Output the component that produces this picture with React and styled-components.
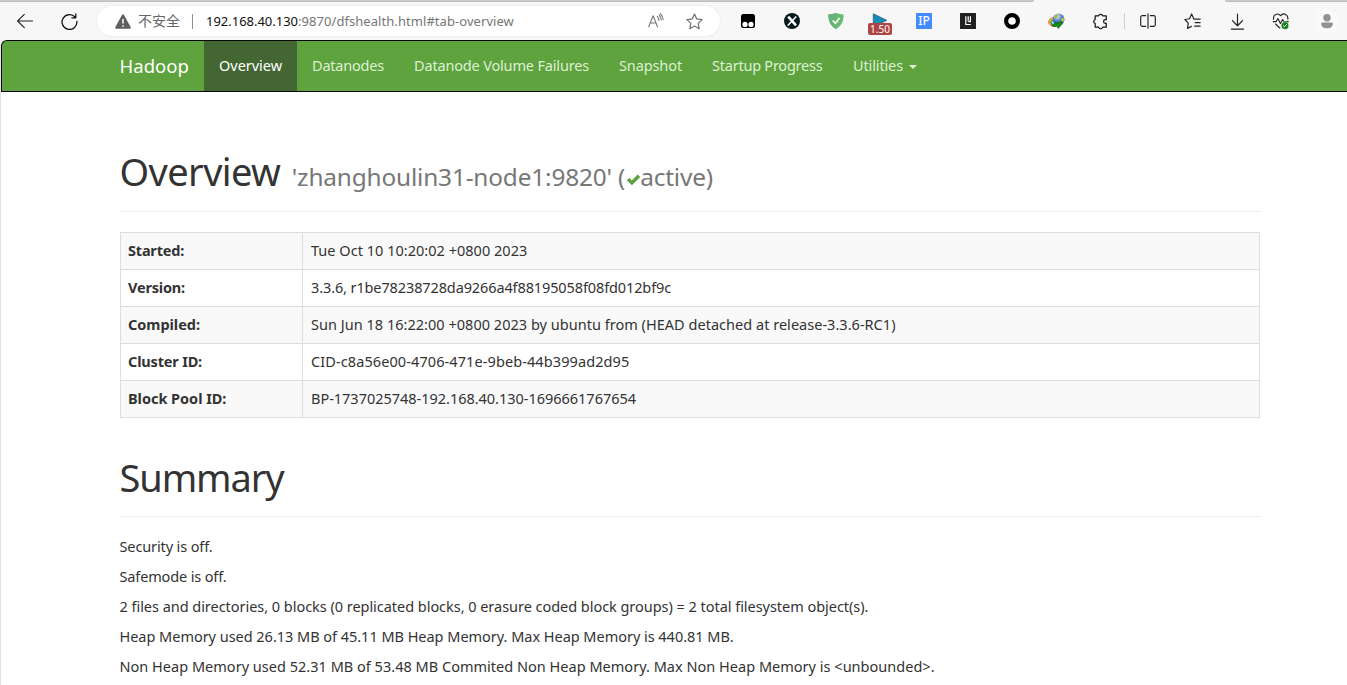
import React from "react";
import styled, { createGlobalStyle } from "styled-components";

const GlobalStyle = createGlobalStyle`
  *, *::before, *::after { box-sizing: border-box; }
  body {
    margin: 0;
    background: #fff;
    color: #333;
    overflow: hidden;
    font-family: "Noto Sans", "Open Sans", "Noto Sans CJK SC", sans-serif;
    font-size: 14.5px;
    line-height: 20px;
  }
`;

const Window = styled.div`
  height: 685px;
  overflow: hidden;
  display: flex;
  flex-direction: column;
  background: #f7f7f7;
`;

const TabEdge = styled.div`
  display: flex;
  justify-content: space-between;
  height: 2px;
  flex: none;
`;
const EdgePiece = styled.div`
  width: ${(p) => p.$w}px;
  background: #cbcbcb;
  border-bottom: 1px solid #bebebe;
  border-radius: ${(p) => (p.$right ? "0 0 0 3px" : "0 0 3px 0")};
`;

const Toolbar = styled.div`
  display: flex;
  align-items: center;
  height: 38px;
  flex: none;
`;
const Cell = styled.div`
  width: ${(p) => p.$w || 44}px;
  flex: none;
  height: 38px;
  display: flex;
  align-items: center;
  justify-content: center;
  position: relative;
  svg { display: block; }
`;
const Address = styled.div`
  display: flex;
  align-items: center;
  width: 623px;
  height: 30px;
  margin: 0 6px 0 9px;
  padding: 0 4px 0 18px;
  border-radius: 15px;
  background: #fff;
  box-shadow: 0 0 3px rgba(0, 0, 0, 0.08);
  flex: none;
  white-space: pre;
`;
const Insecure = styled.span`
  font: 14px "Noto Sans CJK SC", sans-serif;
  color: #666;
  margin: -2px 0 0 7px;
`;
const Split = styled.span`
  width: 1px;
  height: ${(p) => p.$h || 15}px;
  background: ${(p) => p.$c || "#919191"};
  margin: ${(p) => p.$m};
  flex: none;
`;
const Url = styled.span`
  font-size: 13px;
  color: #767676;
  flex: 1;
  letter-spacing: 0.06px;
`;
const Host = styled.span`
  color: #111;
  letter-spacing: -0.02px;
`;
const Badge = styled.span`
  position: absolute;
  left: 10px;
  top: 21px;
  width: 24px;
  height: 12px;
  border-radius: 2px;
  background: #ad4545;
  color: #fff;
  font-size: 10px;
  line-height: 12px;
  text-align: center;
`;
const SquareIcon = styled.span`
  width: 16px;
  height: 16px;
  border-radius: 1px;
  background: #448aff;
  color: #fff;
  font-size: 12px;
  font-weight: 500;
  line-height: 16px;
  text-align: center;
`;
const Avatar = styled.span`
  display: grid;
  place-items: center;
  width: 24px;
  height: 24px;
  border-radius: 50%;
  background: #fafafa;
`;

const Page = styled.div`
  flex: 1;
  border-left: 1px solid #e3e3e3;
  border-top-left-radius: 6px;
  background: #fff;
`;
const Navbar = styled.nav`
  display: flex;
  height: 52px;
  padding-left: 103px;
  background: #5fa33e;
  border: 1px solid #080808;
  border-right: 0;
  border-top-left-radius: 6px;
`;
const NavItem = styled.a`
  display: flex;
  align-items: center;
  width: ${(p) => p.$w}px;
  padding: 0 0 2px 15px;
  white-space: nowrap;
  color: ${(p) => (p.$active ? "#fff" : "#dcf0d3")};
  background: ${(p) => (p.$active ? "#446633" : "transparent")};
  letter-spacing: ${(p) => p.$ls}px;
`;
const Brand = styled(NavItem)`
  font-size: 18.5px;
  color: #fff;
  padding: 0 0 0 14.5px;
`;
const Caret = styled.span`
  margin: 4px 0 0 6px;
  border: 4px solid transparent;
  border-top-color: #dcf0d3;
  border-bottom: 0;
`;

const Container = styled.main`
  width: 1140px;
  margin-left: 119px;
`;
const PageHeader = styled.header`
  margin-top: ${(p) => p.$top}px;
  height: ${(p) => p.$h}px;
  border-bottom: 1px solid #eee;
  margin-bottom: 20px;
`;
const Title = styled.h1`
  margin: 0 0 0 -0.5px;
  height: 40px;
  font-size: 38px;
  font-weight: 400;
  line-height: 40px;
  letter-spacing: ${(p) => p.$ls}px;
  white-space: nowrap;
`;
const Small = styled.small`
  font-size: 24.4px;
  color: #777;
  letter-spacing: -0.17px;
  margin-left: 11.5px;
`;
const Check = styled.svg`
  width: 15px;
  height: 13px;
  margin: 0 -0.5px 0 0.5px;
`;

const Table = styled.div`
  border: 1px solid #ddd;
  border-bottom: 0;
`;
const Row = styled.div`
  display: flex;
  height: 37px;
  border-bottom: 1px solid #ddd;
  background: ${(p) => (p.$striped ? "#f9f9f9" : "#fff")};
`;
const Label = styled.div`
  width: 182px;
  padding: 7px;
  border-right: 1px solid #ddd;
  font-weight: 700;
  letter-spacing: ${(p) => p.$ls}px;
`;
const Value = styled.div`
  padding: 7px 8px;
  white-space: nowrap;
  letter-spacing: ${(p) => p.$ls}px;
`;
const Summary = styled.section`
  margin: -1px 0 0 -0.5px;
`;
const Para = styled.p`
  margin: 0 0 10px;
  white-space: nowrap;
  letter-spacing: ${(p) => p.$ls}px;
`;

const Icon = ({ s = 16, w = 1.1, c = "#222", children, ...rest }) => (
  <svg width={s} height={s} viewBox="0 0 16 16" fill="none" stroke={c} strokeWidth={w} strokeLinecap="round" strokeLinejoin="round" {...rest}>
    {children}
  </svg>
);

const nav = [
  ["Overview", 93, -0.03, true],
  ["Datanodes", 102, -0.2],
  ["Datanode Volume Failures", 205, -0.167],
  ["Snapshot", 93, -0.11],
  ["Startup Progress", 141, -0.23],
];

const rows = [
  ["Started:", -0.2, "Tue Oct 10 10:20:02 +0800 2023", 0.023],
  ["Version:", -0.18, "3.3.6, r1be78238728da9266a4f88195058f08fd012bf9c", -0.115],
  ["Compiled:", -0.03, "Sun Jun 18 16:22:00 +0800 2023 by ubuntu from (HEAD detached at release-3.3.6-RC1)", 0.024],
  ["Cluster ID:", -0.17, "CID-c8a56e00-4706-471e-9beb-44b399ad2d95", 0.096],
  ["Block Pool ID:", -0.03, "BP-1737025748-192.168.40.130-1696661767654", -0.02],
];

const summary = [
  ["Security is off.", -0.124],
  ["Safemode is off.", -0.141],
  ["2 files and directories, 0 blocks (0 replicated blocks, 0 erasure coded block groups) = 2 total filesystem object(s).", -0.036],
  ["Heap Memory used 26.13 MB of 45.11 MB Heap Memory. Max Heap Memory is 440.81 MB.", -0.028],
  ["Non Heap Memory used 52.31 MB of 53.48 MB Commited Non Heap Memory. Max Non Heap Memory is <unbounded>.", 0.017],
];

function BrowserBar() {
  return (
    <Toolbar>
      <Cell $w={50}>
        <Icon><path d="M15.8 8H.8M7.3 1.3.6 8l6.7 6.7" /></Icon>
      </Cell>
      <Cell $w={38}>
        <Icon s={17} w={1.2} c="#111"><path d="M13.4 4A7 7 0 1 0 15 8M13.9.8v3.7h-3.7" /></Icon>
      </Cell>
      <Address>
        <svg width="16" height="15" viewBox="0 0 16 15">
          <path d="M7.1.8a1 1 0 0 1 1.8 0l6.8 12.4a1 1 0 0 1-.9 1.5H1.2a1 1 0 0 1-.9-1.5z" fill="#5f5f5f" />
          <path d="M8 5v4.6M8 11.3v1.5" stroke="#fff" strokeWidth="1.5" />
        </svg>
        <Insecure>不安全</Insecure>
        <Split $m="0 13px 0 12px" />
        <Url><Host>192.168.40.130</Host>:9870/dfshealth.html#tab-overview</Url>
        <Cell $w={32}>
          <Icon c="#777"><path d="M.7 13.8 5.1 2.7l4.4 11.1M2.3 10h5.6M9.3 3.4a5 5 0 0 1 1.6 4M11.2 2a7 7 0 0 1 2 5M12.4.6a9 9 0 0 1 2.7 6" /></Icon>
        </Cell>
        <Cell>
          <Icon s={17} c="#707070"><path d="m8 .9 2.1 4.7 5.1.6-3.8 3.5 1 5.1L8 12.3l-4.4 2.5 1-5.1L.8 6.2l5.1-.6z" /></Icon>
        </Cell>
      </Address>
      <Cell>
        <svg width="14" height="14" viewBox="0 0 14 14">
          <rect width="14" height="14" rx="2.5" fill="#000" />
          <circle cx="4" cy="10.4" r="2.6" fill="#fff" /><circle cx="10" cy="10.4" r="2.6" fill="#fff" />
        </svg>
      </Cell>
      <Cell>
        <svg width="16" height="16" viewBox="0 0 16 16">
          <circle cx="8" cy="8" r="8" fill="#05191b" />
          <path d="m4.2 3.7 7.8 8.6" stroke="#fff" strokeWidth="2.6" />
          <path d="M12.2 3.5 3.8 12.5" stroke="#fff" strokeWidth="1.6" />
        </svg>
      </Cell>
      <Cell>
        <svg width="16" height="16" viewBox="0 0 16 16">
          <path d="M8 0c2.3.9 5 1.2 7.5 1.3C15.9 8 13.7 13 8 16 2.3 13 .1 8 .5 1.3 3 1.2 5.7.9 8 0z" fill="#68bc71" />
          <path d="M8 0C5.7.9 3 1.2.5 1.3.1 8 2.3 13 8 16z" fill="#67b279" />
          <path d="m4.7 7.6 2.6 2.7 4.3-5.2" fill="none" stroke="#fff" strokeWidth="1.5" />
        </svg>
      </Cell>
      <Cell>
        <svg width="16" height="16" viewBox="0 0 16 16">
          <path d="M1.3.8 14.7 7.3 1.3 14z" fill="#168db8" stroke="#255b70" strokeWidth=".8" />
        </svg>
        <Badge>1.50</Badge>
      </Cell>
      <Cell><SquareIcon>IP</SquareIcon></Cell>
      <Cell>
        <svg width="16" height="16" viewBox="0 0 16 16">
          <rect width="16" height="16" rx=".5" fill="#202020" />
          <path d="M5.8 3.2v8.3h5M8.2 3.2v5.4M10.4 3.2v5.4H8.6" fill="none" stroke="#fff" strokeWidth="1.2" />
        </svg>
      </Cell>
      <Cell>
        <svg width="16" height="16" viewBox="0 0 16 16"><circle cx="8" cy="8" r="5.9" fill="#fff" stroke="#000" strokeWidth="4.2" /></svg>
      </Cell>
      <Cell>
        <svg width="17" height="16" viewBox="0 0 17 16">
          <defs>
            <radialGradient id="globe" cx=".4" cy=".25" r=".75">
              <stop offset="0" stopColor="#e2edf6" /><stop offset=".45" stopColor="#5e91cf" /><stop offset="1" stopColor="#193977" />
            </radialGradient>
          </defs>
          <ellipse cx="6" cy="9" rx="5.2" ry="4.3" fill="#ffe21f" stroke="#db4935" strokeWidth="1" />
          <ellipse cx="6.3" cy="9.3" rx="3.4" ry="2.5" fill="#a7d6f5" stroke="#2b9b39" strokeWidth="1.2" />
          <circle cx="10.6" cy="6.4" r="5.8" fill="url(#globe)" />
          <path d="M6 3.3c1.5-2 3.5-2.5 4.5-1.5L9.3 4.5 7 5.5zM13 5.5l3-1v4l-2.500 1z" fill="#b6b64b" />
          <path d="M6.5 10.5 13.6 8.5l.4 2.7-3.7 4.3-1.5-2.2c-2 .6-3.8.2-5-.8 1.2 0 2-.9 2.7-2z" fill="#128c18" stroke="#064f0a" strokeWidth=".5" />
        </svg>
      </Cell>
      <Cell>
        <Icon s={17} w={1.15} c="#111">
          <path d="M3 2.8h3.2a2 2 0 0 1 3.9 0h3.3v3.5h-.8a1.7 1.7 0 0 0 0 3.4h.8v3.6h-3.3a2 2 0 0 1-3.9 0H3V9.9a2 2 0 0 1 0-3.8z" />
        </Icon>
      </Cell>
      <Split $m="0 1px 0 2px" $c="#cfcfcf" $h={16} />
      <Cell>
        <Icon w={1.15}><path d="M8 .7v14.6M5.7 2.6H2.3A1.6 1.6 0 0 0 .7 4.2v7.6a1.6 1.6 0 0 0 1.6 1.6h3.4M10.3 2.6h3.4a1.6 1.6 0 0 1 1.6 1.6v7.6a1.6 1.6 0 0 1-1.6 1.6h-3.4" /></Icon>
      </Cell>
      <Cell $w={45}>
        <Icon s={17}><path d="m15.2 5.7H9.3L7.2.9 5.2 5.4.8 6.1 4 9.5l-.7 5L6.9 12.6M10.5 9h4.7M10 12.4h5.2" /></Icon>
      </Cell>
      <Cell>
        <Icon s={17}><path d="M8 1v10.5M3.2 7.2 8 12l4.8-4.8M2.3 15.2h11.4" /></Icon>
      </Cell>
      <Cell>
        <svg width="18" height="17" viewBox="0 0 18 17" fill="none" stroke="#222" strokeWidth="1.1" strokeLinecap="round" strokeLinejoin="round">
          <path d="M1.6 6.5C.6 2 5.7-1 8.6 2.7c3-3.7 8-1 7.2 3.6M1.2 8.6h3l1.7-3 2.5 5 2.2-4 1.3 2h4.3M3.6 11l4.2 4" />
          <circle cx="13" cy="12.6" r="3.9" fill="#148317" stroke="#f7f7f7" strokeWidth=".6" />
          <path d="m11.5 12.7 1 1 2-2.2" stroke="#fff" strokeWidth="1" />
        </svg>
      </Cell>
      <Cell $w={47}>
        <Avatar>
          <svg width="12" height="15" viewBox="0 0 12 15" fill="#929292">
            <circle cx="6" cy="3.8" r="3.7" />
            <path d="M1.5 8.6h9c.8 0 1.3.5 1.3 1.3 0 2.7-2.4 4.3-5.8 4.3S.2 12.6.2 9.9c0-.8.5-1.3 1.3-1.3z" />
          </svg>
        </Avatar>
      </Cell>
    </Toolbar>
  );
}

export default function App() {
  return (
    <Window>
      <GlobalStyle />
      <TabEdge>
        <EdgePiece $w={1034} />
        <EdgePiece $w={122} $right />
      </TabEdge>
      <BrowserBar />
      <Page>
        <Navbar>
          <Brand $w={99} $ls={0.03}>Hadoop</Brand>
          {nav.map(([name, w, ls, active]) => (
            <NavItem key={name} $w={w} $ls={ls} $active={active}>{name}</NavItem>
          ))}
          <NavItem $w={94} $ls={-0.13}>Utilities<Caret /></NavItem>
        </Navbar>
        <Container>
          <PageHeader $top={59} $h={61}>
            <Title $ls={-0.62}>
              Overview
              <Small>'zhanghoulin31-node1:9820' (<Check viewBox="0 0 15 13"><path d="m.8 7.3 2.5-2.5 2.5 2.6L11.6 1.5l2.7 2.4-8.4 8.4z" fill="#5fa341" /></Check>active)</Small>
            </Title>
          </PageHeader>
          <Table>
            {rows.map(([label, lls, value, vls], i) => (
              <Row key={label} $striped={i % 2 === 0}>
                <Label $ls={lls}>{label}</Label>
                <Value $ls={vls}>{value}</Value>
              </Row>
            ))}
          </Table>
          <PageHeader $top={39} $h={60}>
            <Title $ls={-1.1}>Summary</Title>
          </PageHeader>
          <Summary>
            {summary.map(([text, ls]) => (
              <Para key={text} $ls={ls}>{text}</Para>
            ))}
          </Summary>
        </Container>
      </Page>
    </Window>
  );
}
